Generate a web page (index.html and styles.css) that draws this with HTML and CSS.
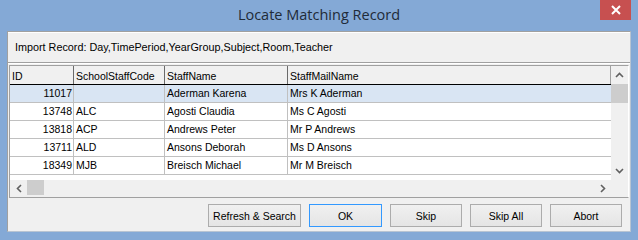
FILE: index.html
```html
<!DOCTYPE html>
<html>
<head>
<meta charset="utf-8">
<link rel="stylesheet" href="styles.css">
</head>
<body>
<div class="window">
  <div class="titlebar">
    <span class="title">Locate Matching Record</span>
    <div class="close">
      <svg width="10" height="10" viewBox="0 0 10 10"><path d="M1 1 L9 9 M9 1 L1 9" stroke="#fff" stroke-width="2" fill="none"/></svg>
    </div>
  </div>
  <div class="client">
    <div class="import">Import Record: Day,TimePeriod,YearGroup,Subject,Room,Teacher</div>
    <div class="grid">
      <div class="header">
        <div class="hc c-id">ID</div>
        <div class="hc c-code">SchoolStaffCode</div>
        <div class="hc c-name">StaffName</div>
        <div class="hc c-mail">StaffMailName</div>
      </div>
      <div class="vscroll">
        <div class="sbtn"><svg width="9" height="6" viewBox="0 0 9 6"><path d="M1 5 L4.5 1.5 L8 5" stroke="#606060" stroke-width="1.6" fill="none"/></svg></div>
        <div class="vthumb"></div>
        <div class="vspace"></div>
        <div class="sbtn"><svg width="9" height="6" viewBox="0 0 9 6"><path d="M1 1 L4.5 4.5 L8 1" stroke="#606060" stroke-width="1.6" fill="none"/></svg></div>
      </div>
      <div class="rows">
        <div class="row sel">
          <div class="c c-id num">11017</div><div class="c c-code"></div><div class="c c-name">Aderman Karena</div><div class="c c-mail">Mrs K Aderman</div>
        </div>
        <div class="row">
          <div class="c c-id num">13748</div><div class="c c-code">ALC</div><div class="c c-name">Agosti Claudia</div><div class="c c-mail">Ms C Agosti</div>
        </div>
        <div class="row">
          <div class="c c-id num">13818</div><div class="c c-code">ACP</div><div class="c c-name">Andrews Peter</div><div class="c c-mail">Mr P Andrews</div>
        </div>
        <div class="row">
          <div class="c c-id num">13711</div><div class="c c-code">ALD</div><div class="c c-name">Ansons Deborah</div><div class="c c-mail">Ms D Ansons</div>
        </div>
        <div class="row">
          <div class="c c-id num">18349</div><div class="c c-code">MJB</div><div class="c c-name">Breisch Michael</div><div class="c c-mail">Mr M Breisch</div>
        </div>
      </div>
      <div class="hscroll">
        <div class="hbtn"><svg width="6" height="9" viewBox="0 0 6 9"><path d="M5 1 L1.5 4.5 L5 8" stroke="#606060" stroke-width="1.6" fill="none"/></svg></div>
        <div class="hthumb"></div>
        <div class="hspace"></div>
        <div class="hbtn"><svg width="6" height="9" viewBox="0 0 6 9"><path d="M1 1 L4.5 4.5 L1 8" stroke="#606060" stroke-width="1.6" fill="none"/></svg></div>
      </div>
      <div class="corner"></div>
    </div>
    <div class="buttons">
      <button class="btn wide">Refresh &amp; Search</button>
      <button class="btn def">OK</button>
      <button class="btn">Skip</button>
      <button class="btn">Skip All</button>
      <button class="btn">Abort</button>
    </div>
  </div>
</div>
</body>
</html>
```
FILE: styles.css
```css
html, body {
  margin: 0;
  padding: 0;
}
body {
  width: 638px;
  height: 240px;
  overflow: hidden;
  font-family: "Liberation Sans", Arial, sans-serif;
  font-size: 10.5px;
  color: #000;
}
.window {
  width: 638px;
  height: 240px;
  background: #84a9d6;
  display: flex;
  flex-direction: column;
}
.titlebar {
  height: 31px;
  flex: none;
  position: relative;
  display: flex;
  justify-content: center;
}
.title {
  font-family: "Open Sans", "Noto Sans", sans-serif;
  font-size: 14.5px;
  line-height: 20px;
  padding-top: 5px;
  color: #1f2b38;
}
.close {
  position: absolute;
  right: 7px;
  top: 0;
  width: 31px;
  height: 20px;
  background: #c75050;
  display: flex;
  align-items: center;
  justify-content: center;
}
.client {
  flex: 1;
  margin: 0 7px 8px 7px;
  background: #f0f0f0;
  border: 1px solid #a0a0a0;
  border-right-color: #b8c4d2;
  border-bottom-color: #b8c4d2;
  display: flex;
  flex-direction: column;
}
.import {
  height: 29px;
  line-height: 29px;
  padding-left: 7px;
  font-size: 10.8px;
  border-top: 1px solid #fff;
  border-bottom: 1px solid #a0a0a0;
  box-shadow: 0 1px 0 #fff;
}
.grid {
  margin: 2px 1px 0 1px;
  border-top: 1px solid #a0a0a0;
  border-left: 1px solid #a0a0a0;
  border-bottom: 1px solid #a0a0a0;
  border-right: 1px solid #fff;
  display: grid;
  grid-template-columns: 601px 17px;
  grid-template-rows: 19px 95px 17px;
  background: #fff;
}
.header {
  grid-column: 1;
  grid-row: 1;
  display: flex;
  background: #f0f0f0;
  border-bottom: 1px solid #000;
}
.hc {
  box-sizing: border-box;
  padding: 3px 0 0 2px;
  border-right: 1px solid #6a6a6a;
  line-height: 14px;
}
.c-id { width: 64px; flex: none; box-sizing: border-box; }
.c-code { width: 91px; flex: none; box-sizing: border-box; }
.c-name { width: 123px; flex: none; box-sizing: border-box; }
.c-mail { width: 323px; flex: none; box-sizing: border-box; }
.hc.c-mail { border-right: 1px solid #a0a0a0; }
.vscroll {
  grid-column: 2;
  grid-row: 1 / 3;
  background: #f0f0f0;
  display: flex;
  flex-direction: column;
}
.sbtn {
  height: 18px;
  flex: none;
  display: flex;
  align-items: center;
  justify-content: center;
}
.vthumb {
  height: 19px;
  background: #cdcdcd;
  flex: none;
}
.vspace { flex: 1; }
.rows {
  grid-column: 1;
  grid-row: 2;
  overflow: hidden;
  background: #fff;
}
.row {
  display: flex;
  height: 18px;
  box-sizing: border-box;
  border-bottom: 1px solid #c0c0c0;
}
.row.sel { background: #d9e5f3; }
.c {
  border-right: 1px solid #c0c0c0;
  padding-left: 2px;
  line-height: 17px;
  white-space: nowrap;
}
.c.c-mail { border-right: none; }
.c.num {
  text-align: right;
  padding-left: 0;
  padding-right: 1px;
}
.hscroll {
  grid-column: 1;
  grid-row: 3;
  background: #f0f0f0;
  display: flex;
}
.hbtn {
  width: 17px;
  flex: none;
  display: flex;
  align-items: center;
  justify-content: center;
}
.hthumb {
  width: 17px;
  flex: none;
  background: #cdcdcd;
  margin: 0 0 2px 0;
}
.hspace { flex: 1; }
.corner {
  grid-column: 2;
  grid-row: 3;
  background: #f0f0f0;
}
.buttons {
  flex: 1;
  display: flex;
  justify-content: flex-end;
  align-items: flex-start;
  gap: 8px;
  padding: 6px 8px 0 0;
}
.btn {
  font-family: "Liberation Sans", Arial, sans-serif;
  font-size: 10.5px;
  color: #000;
  width: 72px;
  height: 23px;
  padding: 0;
  border: 1px solid #acacac;
  background: linear-gradient(#f0f0f0, #e5e5e5);
  border-radius: 0;
}
.btn.wide { width: 93px; }
.btn.def { width: 73px; border-color: #3399ff; }
```
